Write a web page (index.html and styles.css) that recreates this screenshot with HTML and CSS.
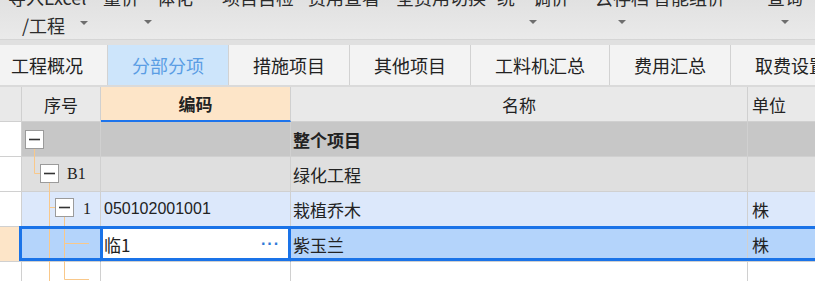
FILE: index.html
```html
<!DOCTYPE html>
<html lang="zh-CN">
<head>
    <meta charset="UTF-8">
    <title>分部分项</title>
    <link rel="stylesheet" href="styles.css">
</head>
<body>
    <div class="toolbar">
        <div class="tb-btn b-import">
            <span>导入Excel</span>
            <span class="tb-line2">/工程 <i class="caret"></i></span>
        </div>
        <div class="tb-btn b-price"><span>量价一体化</span><i class="caret"></i></div>
        <div class="tb-btn b-check"><span>项目自检</span></div>
        <div class="tb-btn b-fee"><span>费用查看</span></div>
        <div class="tb-btn b-full"><span>全费用切换</span></div>
        <div class="tb-btn b-adjust"><span>统一调价</span><i class="caret"></i></div>
        <div class="tb-btn b-cloud"><span>云存档</span><i class="caret"></i></div>
        <div class="tb-btn b-smart"><span>智能组价</span></div>
        <div class="tb-btn b-query"><span>查询</span><i class="caret"></i></div>
    </div>

    <div class="tabs">
        <div class="tab">工程概况</div>
        <div class="tab active">分部分项</div>
        <div class="tab">措施项目</div>
        <div class="tab">其他项目</div>
        <div class="tab">工料机汇总</div>
        <div class="tab">费用汇总</div>
        <div class="tab">取费设置</div>
    </div>

    <div class="grid">
        <div class="row head">
            <div class="cell c0"></div>
            <div class="cell c1">序号</div>
            <div class="cell c2">编码</div>
            <div class="cell c3">名称</div>
            <div class="cell c4">单位</div>
        </div>

        <div class="grid-body">
            <div class="row r-total">
                <div class="cell c0"></div>
                <div class="cell c1"></div>
                <div class="cell c2"></div>
                <div class="cell c3">整个项目</div>
                <div class="cell c4"></div>
            </div>
            <div class="row r-unit">
                <div class="cell c0"></div>
                <div class="cell c1"><span class="no lv2">B1</span></div>
                <div class="cell c2"></div>
                <div class="cell c3">绿化工程</div>
                <div class="cell c4"></div>
            </div>
            <div class="row r-item">
                <div class="cell c0"></div>
                <div class="cell c1"><span class="no lv3">1</span></div>
                <div class="cell c2 code">050102001001</div>
                <div class="cell c3">栽植乔木</div>
                <div class="cell c4">株</div>
            </div>
            <div class="row r-sel">
                <div class="cell c0"></div>
                <div class="cell c1"></div>
                <div class="cell c2 editing"><span>临1</span><span class="more">···</span></div>
                <div class="cell c3">紫玉兰</div>
                <div class="cell c4">株</div>
            </div>
            <div class="row r-last">
                <div class="cell c0"></div>
                <div class="cell c1"></div>
                <div class="cell c2"></div>
                <div class="cell c3"></div>
                <div class="cell c4"></div>
            </div>

            <!-- tree lines and collapse boxes -->
            <svg class="tree" width="100" height="159" viewBox="0 0 100 159">
                <g stroke="#f9c88a" stroke-width="1" fill="none">
                    <path d="M34.5 26.5V51.5H40"/>
                    <path d="M49.5 61V159"/>
                    <path d="M49.5 85.5H55"/>
                    <path d="M64.5 95V157.5"/>
                    <path d="M64.5 121.5H89"/>
                    <path d="M64.5 157.5H89"/>
                </g>
                <g stroke="#9b9b9b" stroke-width="1" fill="#fff">
                    <rect x="25.5" y="8.5" width="18" height="18"/>
                    <rect x="40.5" y="42.5" width="18" height="18"/>
                    <rect x="55.5" y="76.5" width="18" height="18"/>
                </g>
                <g stroke="#333" stroke-width="1.6">
                    <path d="M29 17.5H40"/>
                    <path d="M44 51.5H55"/>
                    <path d="M59 85.5H70"/>
                </g>
            </svg>

            <div class="sel-frame"></div>
        </div>
    </div>
</body>
</html>
```

FILE: styles.css
```css
body {
    margin: 0;
    width: 815px;
    height: 281px;
    overflow: hidden;
    background: #fff;
    color: #222;
    font-family: "Noto Sans CJK SC", "Noto Sans", sans-serif;
}

/* ribbon (icons are scrolled out of view, only labels show) */
.toolbar {
    display: flex;
    height: 40px;
    box-sizing: border-box;
    overflow: hidden;
    background: linear-gradient(#e1e1e1, #eaeaea);
    border-bottom: 1px solid #d5d5d5;
}

.tb-btn {
    display: flex;
    flex-direction: column;
    align-items: center;
    flex: none;
    margin-top: -16px;
    font-size: 18px;
    line-height: 26px;
    color: #2b2b2b;
    white-space: nowrap;
}

.caret {
    display: block;
    width: 0;
    height: 0;
    margin-top: 10px;
    border-left: 4px solid transparent;
    border-right: 4px solid transparent;
    border-top: 4px solid #6e6e6e;
}

.tb-line2 {
    margin-top: 2px;
}

.tb-line2 .caret {
    display: inline-block;
    margin: 0 0 0 11px;
    vertical-align: 8px;
}

.b-import { width: 80px; margin-left: 8px; align-items: flex-start; }
.b-import .tb-line2 { padding-left: 14px; }
.b-price { margin-left: 15px; }
.b-check { margin-left: 29px; }
.b-fee { margin-left: 14px; }
.b-full { margin-left: 16px; }
.b-adjust { margin-left: 11px; }
.b-cloud { margin-left: 26px; }
.b-smart { margin-left: 4px; }
.b-query { margin-left: 42px; }

/* page tabs */
.tabs {
    display: flex;
    height: 45px;
    box-sizing: border-box;
    border-top: 5px solid #e0e0e0;
    background: #f3f3f3;
}

.tab {
    flex: none;
    padding: 0 24px;
    border-right: 1px solid #d2d2d2;
    font-size: 18px;
    line-height: 40px;
    color: #222;
    white-space: nowrap;
}

.tab:first-child {
    padding-left: 11px;
}

.tab.active {
    background: #cde5fb;
    color: #5a9de4;
}

/* grid */
.row {
    display: flex;
    height: 35px;
}

.row.r-last {
    height: 19px;
}

.cell {
    flex: none;
    display: flex;
    align-items: center;
    box-sizing: border-box;
    border-right: 1px solid #d0d0d0;
    border-bottom: 1px solid #d0d0d0;
    font-size: 17px;
    white-space: nowrap;
    overflow: hidden;
}

.r-last .cell {
    border-bottom: none;
}

.c0 { width: 22px; }
.c1 { width: 79px; }
.c2 { width: 190px; padding-left: 3px; }
.c3 { width: 457px; padding-left: 2px; }
.c4 { width: 67px; padding-left: 4px; border-right: none; }

.head {
    height: 37px;
    box-sizing: border-box;
    border-top: 2px solid #dadada;
}

.head .cell {
    background: #e9e9e9;
    justify-content: center;
    padding-left: 0;
}

.head .c2 {
    background: #fde5c8;
    font-weight: bold;
    border-bottom: 2px solid #1d74ec;
}

.head .c4 {
    justify-content: flex-start;
    padding-left: 4px;
}

.grid-body {
    position: relative;
}

.r-total .c1, .r-total .c2, .r-total .c3, .r-total .c4 { background: #c7c7c7; }
.r-total .c3 { font-weight: bold; }
.r-unit .c1, .r-unit .c2, .r-unit .c3, .r-unit .c4 { background: #dfdfdf; }
.r-item .c1, .r-item .c2, .r-item .c3, .r-item .c4 { background: #dce8fb; }

.r-sel .c0 { background: #fde5c8; }
.r-sel .c1, .r-sel .c3, .r-sel .c4 { background: #b4d4fb; }
.r-sel .c1 { border-right-color: #1a73e8; }

.no {
    font-family: "Liberation Serif", serif;
    font-size: 16px;
}

.lv2 { padding-left: 45px; }
.lv3 { padding-left: 61px; }

.code {
    font-family: "Liberation Sans", sans-serif;
    font-size: 16px;
}

.editing {
    background: #fff;
    justify-content: space-between;
    padding-right: 10px;
    border-right-color: #1a73e8;
    box-shadow: inset 2px 0 #1a73e8, inset -2px 0 #1a73e8;
}

.more {
    color: #2f7ad8;
    font-family: "Liberation Sans", sans-serif;
    font-size: 16px;
    font-weight: bold;
    letter-spacing: 1px;
}

.tree {
    position: absolute;
    left: 0;
    top: 0;
    pointer-events: none;
}

.sel-frame {
    position: absolute;
    left: 19px;
    right: -4px;
    top: 104px;
    height: 35px;
    box-sizing: border-box;
    border: 3px solid #1a73e8;
    pointer-events: none;
}
```
